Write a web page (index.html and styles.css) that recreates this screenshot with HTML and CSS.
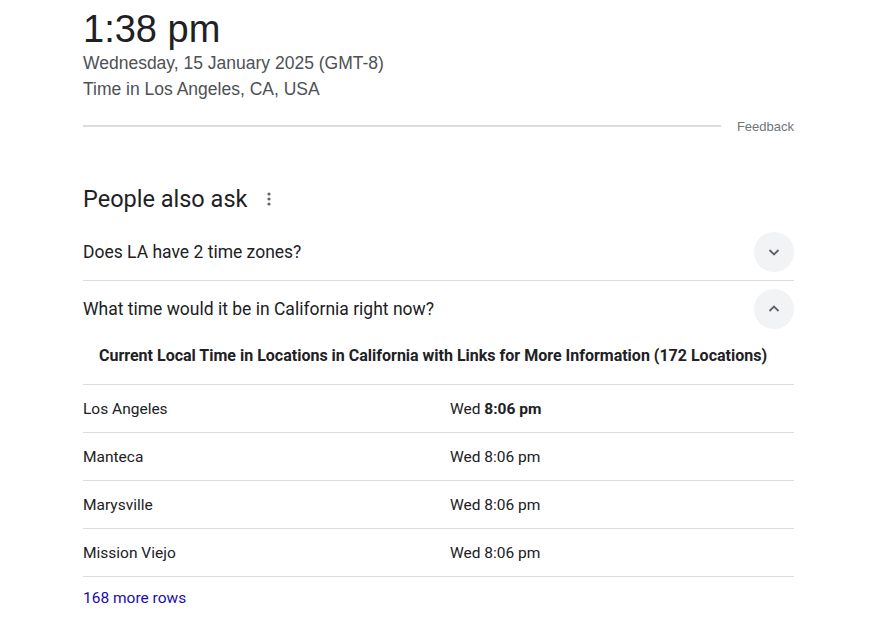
FILE: index.html
```html
<!DOCTYPE html>
<html lang="en">
<head>
    <meta charset="UTF-8">
    <title>Time in Los Angeles</title>
    <link rel="stylesheet" href="styles.css">
</head>
<body>
    <div class="page">
        <div class="clock">
            <div class="clock-time">1:38 pm</div>
            <div class="clock-date">Wednesday, 15 January 2025 (GMT-8)</div>
            <div class="clock-place">Time in Los Angeles, CA, USA</div>
        </div>

        <div class="feedback-row">
            <div class="feedback-line"></div>
            <span class="feedback">Feedback</span>
        </div>

        <div class="paa">
            <div class="paa-title">
                <span>People also ask</span>
                <svg class="dots" width="4" height="16" viewBox="0 0 4 16">
                    <circle cx="2" cy="3" r="1.6" />
                    <circle cx="2" cy="8" r="1.6" />
                    <circle cx="2" cy="13" r="1.6" />
                </svg>
            </div>

            <div class="question">
                <span>Does LA have 2 time zones?</span>
                <div class="chevron">
                    <svg width="14" height="14" viewBox="0 0 14 14"><path d="M2.5 5l4.5 4.5 4.5-4.5" /></svg>
                </div>
            </div>

            <div class="question open">
                <span>What time would it be in California right now?</span>
                <div class="chevron">
                    <svg width="14" height="14" viewBox="0 0 14 14"><path d="M2.5 9l4.5-4.5 4.5 4.5" /></svg>
                </div>
            </div>

            <div class="answer">
                <div class="table-caption">Current Local Time in Locations in California with Links for More Information (172 Locations)</div>
                <div class="table">
                    <div class="table-row">
                        <span>Los Angeles</span>
                        <span>Wed <b>8:06 pm</b></span>
                    </div>
                    <div class="table-row">
                        <span>Manteca</span>
                        <span>Wed 8:06 pm</span>
                    </div>
                    <div class="table-row">
                        <span>Marysville</span>
                        <span>Wed 8:06 pm</span>
                    </div>
                    <div class="table-row">
                        <span>Mission Viejo</span>
                        <span>Wed 8:06 pm</span>
                    </div>
                </div>
                <a class="more-rows" href="#">168 more rows</a>
            </div>
        </div>
    </div>
</body>
</html>
```

FILE: styles.css
```css
* {
    margin: 0;
    padding: 0;
    box-sizing: border-box;
}

body {
    background: #fff;
    font-family: 'Liberation Sans', Arial, sans-serif;
    color: #202124;
}

.page {
    width: 711px;
    margin-left: 83px;
}

/* Uhr oben */
.clock {
    padding-top: 9px;
}

.clock-time {
    font-size: 38px;
    line-height: 41px;
    color: #202124;
}

.clock-date,
.clock-place {
    font-size: 17.5px;
    line-height: 26px;
    color: #4d5156;
}

.feedback-row {
    display: flex;
    align-items: center;
    gap: 16px;
    margin-top: 12px;
    height: 24px;
}

.feedback-line {
    flex: 1;
    height: 2px;
    background: #dadce0;
}

.feedback {
    font-size: 13px;
    color: #70757a;
}

/* People also ask */
.paa {
    margin-top: 47px;
    font-family: Roboto, 'Noto Sans', sans-serif;
}

.paa-title {
    display: flex;
    align-items: center;
    gap: 20px;
    font-size: 23.5px;
    line-height: 28px;
    color: #202124;
    margin-bottom: 11px;
}

.dots circle {
    fill: #5f6368;
}

.question {
    display: flex;
    align-items: center;
    justify-content: space-between;
    height: 57px;
    font-size: 17.5px;
    color: #202124;
    border-bottom: 1px solid #dadce0;
}

.question.open {
    border-bottom: none;
    height: 56px;
}

.chevron {
    width: 40px;
    height: 40px;
    border-radius: 50%;
    background: #f1f3f4;
    display: flex;
    align-items: center;
    justify-content: center;
}

.chevron path {
    fill: none;
    stroke: #5f6368;
    stroke-width: 1.8;
}

.table-caption {
    font-size: 16px;
    font-weight: bold;
    text-align: center;
    line-height: 20px;
    padding: 9px 11px 18px 0;
    border-bottom: 1px solid #dadce0;
}

.table-row {
    display: grid;
    grid-template-columns: 367px 1fr;
    align-items: center;
    height: 48px;
    font-size: 15.5px;
    border-bottom: 1px solid #dadce0;
}

.table-row b {
    font-weight: bold;
}

.more-rows {
    display: block;
    padding-top: 12px;
    font-size: 15.5px;
    color: #1a0dab;
    text-decoration: none;
}
```
